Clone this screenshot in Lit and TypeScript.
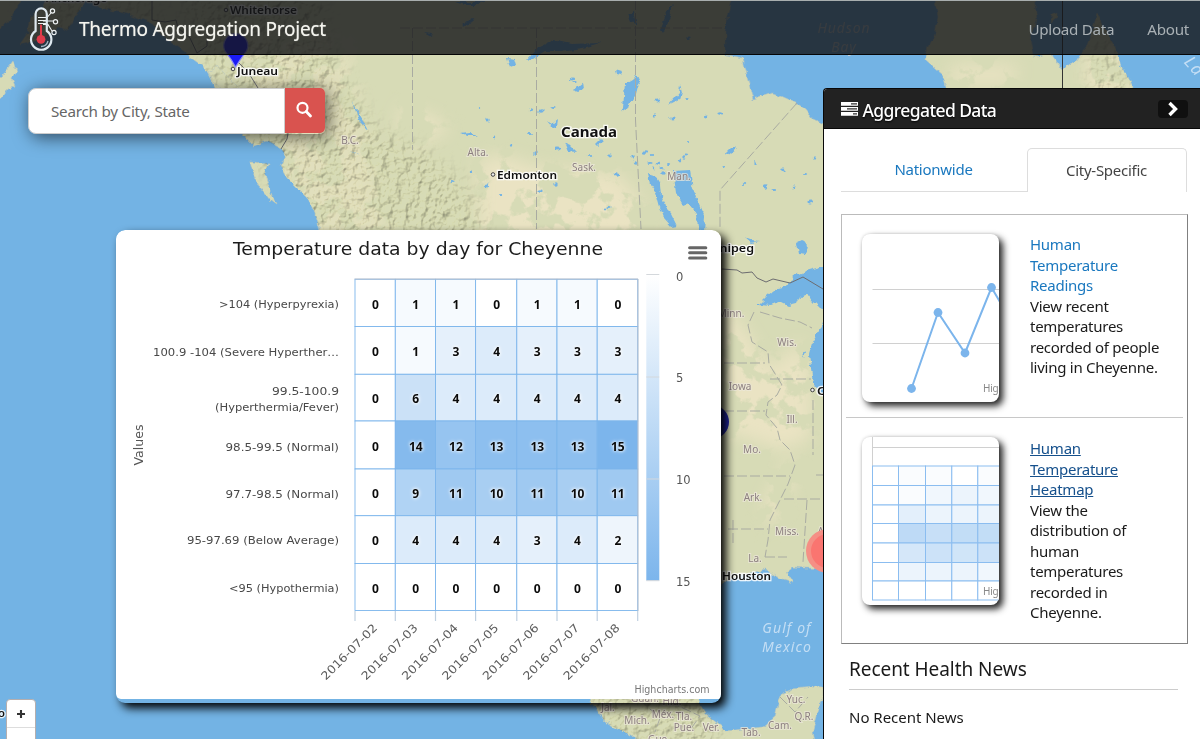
import { LitElement, html, svg, css } from "lit";
import { customElement } from "lit/decorators.js";

type Pt = [number, number];

/* ---------- map ---------- */

const LAND = [
  // mainland: Alaska panhandle down the Pacific coast, across the plains and round the Gulf
  "M-10-10H735L729 12L725 30L725 55L743 58L747 76L753 100L760 97L773 93L781 96L797 103L806 110L813 119L826 125V200H830V569L806 568L793 567L786 572L793 583L780 579L767 570L747 573L732 579L715 587L640 600L420 500L350 300L318 229L317 222L314 210L307 197L297 187L287 177L281 166L286 156L280 148L267 141L254 146L243 135L232 112L215 88L208 74L202 65L191 57L180 48L160 34L150 22L128 14L100 8L88 -2Z",
  // Queen Charlotte islands
  "M250 162L268 163L265 172L268 184L272 194L277 205L270 200L260 187L253 173Z",
  "M208 72L218 66L230 80L241 93L236 96L222 90L213 82Z",
  // Kodiak and the Alaska peninsula
  "M0 80L6 70L12 62L14 68L19 70L12 78L15 86L8 88L2 98L-6 102L-6 80Z",
  "M-4-4H22L14 12L8 22L-4 30Z",
  "M20 44L27 34L30 16L42 8L50-6L88-6L76 16L68 30L60 26L48 36L36 40Z",
  // Quebec and Labrador
  "M933-10L938 17L935 33L928 47L925 60L934 68L943 76L947 90L950 110H1150L1133 88L1128 77L1122 68L1117 53L1110 37L1102 24L1097 12L1093 30L1087 47L1079 56L1077 60L1070 64L1062 70L1056 62L1050 53L1040 57L1033 56L1030 40L1037 20L1033-10Z",
  "M1052 14L1056 12L1056 18L1051 22Z",
  // Mexico and Yucatan
  "M586 690L592 704L597 708L600 715L606 722L615 728L626 733L640 742H815L813 730L818 712L823 700V688L813 687L793 689L783 693L778 704L775 717L763 727L743 729L727 731L718 724L712 719L705 713L700 704L695 690Z",
];

const LAKES = [
  "M623 108L625 84L632 80L636 76L641 80L637 86L634 98L628 108L621 113Z",
  "M527 60L540 46L553 40L572 44L600 43L582 48L560 51L545 51L532 59L522 61Z",
  "M507 58L514 59L516 66L510 68Z",
  "M573 90L583 82L584 89L578 92Z",
  "M595 144L601 138L603 141L597 146Z",
  "M547 121L552 124L558 119L557 126L553 128Z",
  "M615 70L622 72L620 75L616 74Z",
  "M668 105L674 98L679 92L680 84L682 92L680 99L672 103Z",
  "M726 154L732 148L737 148L731 153L727 156Z",
  "M461 134L470 133L477 136L468 136Z",
  "M564 141L571 146L577 152L568 151Z",
  "M628 14L634 12L637 25L631 22Z",
  "M660 30L668 10L674 4L668 22L662 33Z",
  "M455 2H487L478 5L464 5Z",
  "M463 24L473 18L474 22L466 25Z",
  "M424 33L432 34L431 37Z",
  "M648 174L655 176L660 184L661 196L664 207L671 214L677 226L672 227L664 218L660 207L656 192L650 184Z",
  "M673 171L690 170L692 184L697 200L705 219L704 231L698 229L697 214L688 203L683 205L676 193Z",
  "M745 237L753 240L760 241L752 243Z",
  "M797 243L803 240L807 246L805 255L799 254Z",
  // Superior, Michigan
  "M758 305L768 295L777 288L787 286L793 276L806 271L820 267H830V311L819 308L813 302L807 294L800 297L797 304L788 306L780 302L770 306Z",
  "M823 322L818 333L812 343L809 355L811 368L813 383L819 393H830V322Z",
  "M803 350L806 352L804 357Z",
  "M352 102L358 113L366 126L368 130L359 121Z",
  "M352 151L359 156L354 153Z",
  "M1055 40L1060 38L1061 44Z",
];

const PONDS: Pt[] = [
  [479, 107], [488, 120], [531, 110], [553, 108], [495, 138], [535, 153], [530, 133], [558, 149], [510, 146], [575, 82],
  [572, 79], [541, 111], [590, 156], [610, 156], [616, 174], [609, 208], [605, 209], [555, 184], [500, 195], [672, 118],
  [655, 116], [687, 98], [706, 117], [721, 113], [688, 143], [783, 170], [766, 187], [774, 190], [793, 187], [756, 162],
  [806, 174], [810, 202], [814, 157], [723, 167], [687, 155], [645, 152], [652, 155], [632, 157], [635, 162], [650, 163],
  [679, 160], [684, 158], [668, 164], [657, 101], [470, 173], [452, 181], [487, 186], [540, 191], [744, 184], [688, 37],
  [657, 163], [661, 168], [654, 168], [664, 172],
];

const DASHES = [
  "M412.5 28V150", "M536.5 28V229", "M635.5 0V120L641 229", "M400 28H725", "M797 103L720 190V229",
  "M724 363H765", "M724 411H765", "M724 476H790", "M728 529H768", "M770 379H811", "M784 499H824",
  "M733 520V545", "M807 500L803 562", "M813 400V455", "M765 557H787", "M816 475H824",
  "M754 312L748 325L752 342L768 352L769 364L782 385L777 395L768 402L766 415L777 428L780 440L790 450L795 465L788 484L780 500L770 520L768 540L765 557",
  "M760 312L780 318L800 322L812 328", "M780 697L795 712L808 697", "M640 700L660 718L655 732", "M670 702L700 716L690 730",
];

const REGIONS: [string, number, number][] = [
  ["B.C.", 350, 144], ["Alta.", 478, 156], ["Sask.", 584, 171], ["Man.", 679, 180], ["Minn.", 731, 317], ["Wis.", 787, 346],
  ["Iowa", 740, 390], ["Ill.", 792, 423], ["Mo.", 752, 453], ["Ark.", 753, 501], ["Miss.", 787, 535], ["La.", 755, 562],
  ["Al", 822, 535], ["Guan.", 645, 702], ["Hid.", 672, 705], ["Jal.", 608, 711], ["Mich.", 637, 724], ["Méx.", 663, 718],
  ["Tla.", 684, 720], ["Pue.", 684, 731], ["Ver.", 711, 731], ["Gue.", 659, 743], ["Tab.", 751, 736], ["Cam.", 780, 729],
  ["Yuc.", 796, 703], ["Q.R.", 804, 720],
];

@customElement("map-canvas")
class MapCanvas extends LitElement {
  static styles = css`
    :host { display: block; width: 1200px; height: 739px; }
    svg { display: block; }
    text { font-family: "Noto Sans", "Open Sans", sans-serif; }
    .region { font-size: 10px; fill: #8d8080; stroke: #ece8dc; stroke-width: 2px; stroke-opacity: 0.7; paint-order: stroke; text-anchor: middle; }
    .city { font-size: 11.5px; font-weight: 600; fill: #111; stroke: #fff; stroke-width: 2.6px; stroke-opacity: 0.85; paint-order: stroke; }
    .country { font-size: 15px; font-weight: 700; }
    .sea { font-size: 14px; font-style: italic; letter-spacing: 1.1px; fill: #c4def4; text-anchor: middle; }
    .bay { fill: #c4d0da; letter-spacing: 0.9px; }
    .strait { font-size: 17px; }
    .relief { mix-blend-mode: multiply; }
    .dash { fill: none; stroke: #a9aba2; stroke-width: 1; stroke-dasharray: 10 3; }
    .border { fill: none; stroke: #6c6c70; stroke-width: 1; }
  `;
  render() {
    const city = (t: string, x: number, y: number, w: number) =>
      svg`<text class="city" x=${x} y=${y} textLength=${w} lengthAdjust="spacingAndGlyphs">${t}</text>`;
    const dot = (x: number, y: number) => svg`<circle cx=${x} cy=${y} r="1.8" fill="#eee" stroke="#444" stroke-width="1"/>`;
    return html`<svg width="1200" height="739" viewBox="0 0 1200 739">
      <defs>
        <filter id="rough" x="-5%" y="-5%" width="110%" height="110%" color-interpolation-filters="sRGB">
          <feTurbulence type="fractalNoise" baseFrequency="0.13" numOctaves="3" seed="4" />
          <feDisplacementMap in="SourceGraphic" scale="6" xChannelSelector="R" yChannelSelector="G" />
        </filter>
        <filter id="relief" x="0" y="0" width="100%" height="100%" color-interpolation-filters="sRGB">
          <feTurbulence type="fractalNoise" baseFrequency="0.13" numOctaves="4" seed="9" />
          <feDiffuseLighting surfaceScale="2.2" diffuseConstant="1.2" lighting-color="#fffdf2" result="l">
            <feDistantLight azimuth="225" elevation="58" />
          </feDiffuseLighting>
          <feComposite in="l" in2="SourceGraphic" operator="in" />
        </filter>
        <filter id="sand" x="0" y="0" width="100%" height="100%" color-interpolation-filters="sRGB">
          <feTurbulence type="fractalNoise" baseFrequency="0.035" numOctaves="5" seed="21" />
          <feColorMatrix values="0 0 0 0 0.918  0 0 0 0 0.89  0 0 0 0 0.765  14 0 0 0 -6.2" result="s" />
          <feComposite in="s" in2="SourceGraphic" operator="in" />
        </filter>
        <filter id="soft" x="-20%" y="-20%" width="140%" height="140%"><feGaussianBlur stdDeviation="9" /></filter>
        <clipPath id="land">${LAND.map((d) => svg`<path d=${d} />`)}</clipPath>
        <mask id="hills">
          <g filter="url(#soft)" fill="#fff">
            <path d="M170-20H320L335 60L375 130L425 150L470 190L490 240H310L230 120Z" />
            <path d="M15-10H150L170 40L20 50Z" fill="#aaa" />
            <path d="M580 690H710L720 750H590Z" />
            <path d="M1092 0L1140 100H1090Z" fill="#bbb" />
          </g>
        </mask>
        <mask id="plains">
          <g filter="url(#soft)" fill="#fff">
            <path d="M478 160L500 155L540 168L600 172L618 174L640 200L648 240H480Z" />
            <path d="M400 105L440 120L450 130L415 145L400 130Z" />
            <path d="M724 300L745 330L770 370L800 340L812 380L810 440L780 450L724 430Z" />
            <path d="M790 460L800 462L782 510L768 530L765 500Z" />
            <path d="M950 66L1020 66L1010 84L950 84ZM1090 40L1130 60V90H1085Z" />
            <path d="M230 30L350 40L360 110L390 240H300Z" fill="#888" />
          </g>
        </mask>
      </defs>
      <rect width="1200" height="739" fill="#73b3e4" />
      <g filter="url(#rough)" fill="#d7dbb6" stroke="#b9c6bd" stroke-width="0.6">${LAND.map((d) => svg`<path d=${d} />`)}</g>
      <g clip-path="url(#land)">
        <g mask="url(#plains)"><rect width="1200" height="739" filter="url(#sand)" /></g>
      </g>
      <g clip-path="url(#land)" class="relief" opacity="0.6">
        <g mask="url(#hills)"><rect width="1200" height="739" filter="url(#relief)" /></g>
      </g>
      <g filter="url(#rough)" fill="#73b3e4">
        ${LAKES.map((d) => svg`<path d=${d} />`)}
        ${PONDS.map(([x, y], i) => svg`<ellipse cx=${x} cy=${y} rx=${1.2 + (i % 4) * 0.5} ry=${1 + (i % 3) * 0.4} />`)}
      </g>
      ${DASHES.map((d) => svg`<path class="dash" d=${d} />`)}
      <path class="border" d="M152-5V20L165 22L176 20L178 28L190 38L197 53L207 46V40M238 62L248 72L258 88M288 133L287 139L281 149M722 269L737 270L742 273L752 272L757 278L766 282L773 279L790 283L803 277L823 289" />
      <path d="M1062.5 0V90" stroke="#333" stroke-width="1" />
      <text class="sea bay" x="844" y="33">Hudson</text>
      <text class="sea bay" x="844" y="52">Bay</text>
      <text class="sea" x="787" y="633">Gulf of</text>
      <text class="sea" x="787" y="652">Mexico</text>
      <text class="sea strait" transform="translate(1190 70) rotate(48)">La</text>
      ${REGIONS.map(([t, x, y]) => svg`<text class="region" x=${x} y=${y}>${t}</text>`)}
      ${dot(226, 10)}${dot(233, 69)}${dot(493, 174.5)}${dot(812.5, 390)}
      ${city("Anchorage", 46, 2, 61)}
      ${city("Whitehorse", 230, 14, 67)}
      ${city("Juneau", 237, 75, 41)}
      ${city("Edmonton", 497, 179, 60)}
      ${city("Winnipeg", 696, 252, 58)}
      ${city("Houston", 722, 580, 49)}
      ${city("Chicago", 817, 395, 50)}
      ${city("o", -2, 717, 7)}
      <text class="city country" x="561" y="137" textLength="56" lengthAdjust="spacingAndGlyphs">Canada</text>
      <path d="M235.5 67L231.5 60L225 51A12 12 0 1 1 246.500 51L240 60Z" fill="#1b1bf5" stroke="#8a8af5" stroke-width="1.2" />
      <circle cx="712" cy="422" r="17" fill="#2024a4" />
      <circle cx="828" cy="551" r="22" fill="#f58f85" />
      <circle cx="828" cy="551" r="17" fill="#fa7570" />
    </svg>`;
  }
}

/* ---------- heatmap ---------- */

const DAYS = ["2016-07-02", "2016-07-03", "2016-07-04", "2016-07-05", "2016-07-06", "2016-07-07", "2016-07-08"];
const COLS = [239, 279.3, 319.5, 359.6, 400.8, 441, 481.2, 521.7];
const ROWS = [49.3, 96.5, 144.3, 191, 239, 285.7, 333.5, 380.5];
const HEAT = [
  [0, 1, 1, 0, 1, 1, 0],
  [0, 1, 3, 4, 3, 3, 3],
  [0, 6, 4, 4, 4, 4, 4],
  [0, 14, 12, 13, 13, 13, 15],
  [0, 9, 11, 10, 11, 10, 11],
  [0, 4, 4, 4, 3, 4, 2],
  [0, 0, 0, 0, 0, 0, 0],
];
const Y_LABELS: [string, number, number][] = [
  [">104 (Hyperpyrexia)", 78, 120],
  ["100.9 -104 (Severe Hyperther…", 126, 186],
  ["99.5-100.9", 165, 67],
  ["(Hyperthermia/Fever)", 180.5, 124],
  ["98.5-99.5 (Normal)", 221, 113.5],
  ["97.7-98.5 (Normal)", 267.5, 113.5],
  ["95-97.69 (Below Average)", 314, 152],
  ["<95 (Hypothermia)", 362, 110],
];
const shade = (v: number, max = 15) => {
  const k = v / max;
  const mix = (to: number) => Math.round(255 + (to - 255) * k);
  return `rgb(${mix(124)},${mix(181)},${mix(236)})`;
};

@customElement("heatmap-card")
class HeatmapCard extends LitElement {
  static styles = css`
    :host { display: block; width: 605px; height: 473px; border-radius: 9px; box-shadow: 5px 5px 10px #000; overflow: hidden; }
    svg { display: block; background: #fff; border-radius: 9px 9px 2px 5px; }
    text { font-family: "DejaVu Sans", "Noto Sans", sans-serif; }
    .title { font-size: 18.5px; fill: #1c1c1c; }
    .label { font-size: 11.3px; fill: #484848; text-anchor: end; }
    .day { fill: #5c5c5c; font-size: 11.3px; text-anchor: end; }
    .axis { font-size: 11.5px; fill: #555; }
    .val { font-family: "Noto Sans", sans-serif; font-size: 12px; font-weight: 700; fill: #0a0a0a; text-anchor: middle; text-shadow: 0 0 3px #fff, 0 0 4px #fff; }
    .credit { font-size: 9.6px; fill: #777; }
  `;
  render() {
    return html`<svg width="605" height="469" viewBox="0 0 605 469">
      <defs><linearGradient id="scale" x1="0" y1="0" x2="0" y2="1"><stop offset="0" stop-color="#fff" /><stop offset="1" stop-color="#7cb5ec" /></linearGradient></defs>
      <text class="title" x="117" y="25" textLength="370" lengthAdjust="spacingAndGlyphs">Temperature data by day for Cheyenne</text>
      ${[17.7, 22.8, 28].map((y) => svg`<path d=${`M573.6 ${y}H589.800`} stroke="#666" stroke-width="3" stroke-linecap="round" />`)}
      ${HEAT.map((row, r) => row.map((v, c) => svg`<rect x=${COLS[c]} y=${ROWS[r]} width=${COLS[c + 1] - COLS[c]} height=${ROWS[r + 1] - ROWS[r]} fill=${shade(v)} stroke="#7cb5ec" stroke-width="0.9" />`))}
      ${COLS.map((x) => svg`<path d=${`M${x} 381V391`} stroke="#c0d0e0" stroke-width="1.2" />`)}
      <path d="M238.5 49H522V381" fill="none" stroke="#b8c0cc" stroke-width="1" />
      ${HEAT.map((row, r) => row.map((v, c) => svg`<text class="val" x=${(COLS[c] + COLS[c + 1]) / 2 + 0.4} y=${(ROWS[r] + ROWS[r + 1]) / 2 + 5.8}>${v}</text>`))}
      ${Y_LABELS.map(([t, y, w]) => svg`<text class="label" x="223" y=${y} textLength=${w} lengthAdjust="spacingAndGlyphs">${t}</text>`)}
      <text class="axis" transform="translate(26.5 235.5) rotate(-90)" textLength="41" lengthAdjust="spacingAndGlyphs">Values</text>
      ${DAYS.map((d, i) => svg`<text class="day" transform=${`translate(${262 + i * 40.4} 398.5) rotate(-45)`} textLength="74" lengthAdjust="spacingAndGlyphs">${d}</text>`)}
      <rect x="530.3" y="44.5" width="13" height="306" fill="url(#scale)" />
      ${[44.5, 147, 249, 350.7].map((y) => svg`<path d=${`M530.3 ${y}H543.300`} stroke="#d4d8dc" stroke-width="1" />`)}
      ${["0", "5", "10", "15"].map((t, i) => svg`<text class="axis" x="560" y=${50.5 + i * 101.7}>${t}</text>`)}
      <text class="credit" x="518.5" y="463" textLength="75" lengthAdjust="spacingAndGlyphs">Highcharts.com</text>
    </svg>`;
  }
}

/* ---------- thumbnails ---------- */

const TX = [10.5, 36.5, 63.5, 89.8, 115.8, 142];
const TY = [29, 48.5, 68, 86.5, 106, 125.5, 144, 163];
const lineThumb = html`<svg width="137" height="168" viewBox="0 0 137 168">
  <path d="M10.5 55.5H137M10.5 109.5H137" stroke="#d0d0d0" />
  <path d="M49.5 154.5L76 78.5L103 119L129.5 53.5L141 73" fill="none" stroke="#7cb5ec" stroke-width="2" />
  ${([[49.5, 154.5], [76, 78.5], [103, 119], [129.5, 53.5]] as Pt[]).map(([x, y]) => svg`<circle cx=${x} cy=${y} r="4.4" fill="#7cb5ec" />`)}
  <text x="121" y="158" font-family="Noto Sans, sans-serif" font-size="10" fill="#888">Hig</text>
</svg>`;
const gridThumb = html`<svg width="137" height="168" viewBox="0 0 137 168">
  <path d="M10.5 0V163M10.5 10.5H137" stroke="#d0d0d0" fill="none" />
  ${HEAT.map((row, r) => row.slice(0, 5).map((v, c) => svg`<rect x=${TX[c]} y=${TY[r]} width=${TX[c + 1] - TX[c]} height=${TY[r + 1] - TY[r]} fill=${shade(v, 28)} stroke="#8bbdf0" />`))}
  <text x="121" y="158" font-family="Noto Sans, sans-serif" font-size="10" fill="#888">Hig</text>
</svg>`;

/* ---------- sidebar ---------- */

@customElement("data-panel")
class DataPanel extends LitElement {
  static styles = css`
    :host { display: flex; flex-direction: column; box-sizing: border-box; width: 377px; height: 651px; border: 1px solid #080808; border-right: 0; border-bottom: 0; border-radius: 4px 0 0 0; background: #fff; overflow: hidden; font-size: 15px; letter-spacing: -0.26px; color: #1a1a1a; }
    .head { display: flex; align-items: center; height: 39px; flex: none; padding: 0 12px 0 16px; background: #222; border-bottom: 1px solid #080808; color: #fff; }
    .stack { margin-top: 1px; }
    .head h2 { flex: 1; margin: 0 0 0 3.5px; font-size: 17.5px; font-weight: 500; letter-spacing: -0.6px; line-height: 38px; padding-top: 2px; text-shadow: 0 1px 2px #000; }
    .toggle { display: grid; place-items: center; width: 30px; height: 18px; border-radius: 4px; background: #101010; }
    .tabs { display: flex; margin: 19px 13px 0 17px; height: 44px; line-height: 43px; }
    .tab { box-sizing: border-box; text-align: center; border-bottom: 1px solid #ddd; width: 186px; color: #1a78bf; padding-right: 1px; }
    .tab.on { width: 160px; border: 1px solid #ddd; border-bottom: 0; border-radius: 5px 5px 0 0; color: #444; padding: 0 1px 0 0; line-height: 42px; }
    .charts { box-sizing: border-box; height: 430px; flex: none; margin: 22px 12px 0 17px; border: 1px solid; border-color: #bbb #808080 #808080 #bbb; padding: 0 4px 0 4px; }
    .row { box-sizing: border-box; display: flex; padding: 19px 0 0 16px; height: 202px; }
    .row + .row { border-top: 1px solid #c8c8c8; height: 220px; padding-top: 19px; }
    .thumb { flex: none; width: 137px; height: 167.5px; margin-right: 31px; border-radius: 8px; background: #fff; box-shadow: 4px 4px 7px #222, 0 0 3px rgba(0, 0, 0, 0.15); overflow: hidden; }
    .thumb svg { display: block; }
    .copy { width: 140px; line-height: 20.5px; }
    .row + .row .copy { padding-top: 1px; }
    .copy a { display: block; color: #1a78bf; }
    .copy a.hover { color: #15508c; text-decoration: underline; }
    .copy a, .copy span { white-space: pre-line; }
    h3 { margin: 10px 22px 0 25px; height: 35px; line-height: 30px; font-size: 19px; font-weight: 400; letter-spacing: -0.05px; border-bottom: 1px solid #ccc; }
    .none { margin: 16px 0 0 25px; line-height: 22px; letter-spacing: -0.02px; }
  `;
  render() {
    return html`
      <div class="head">
        <svg class="stack" width="19" height="16" viewBox="0 0 19 16"><path d="M1 1h17v3.700H1zM1 6h17v3.700H1zM1 11h17v3.700H1z" fill="#fff" /><path d="M11 2.800h6M7 7.800h10M13 12.800h4" stroke="#333" stroke-width="1.200" /></svg>
        <h2>Aggregated Data</h2>
        <span class="toggle"><svg width="14" height="18" viewBox="0 0 14 18"><path d="M3.500 3L9.500 9L3.500 15" fill="none" stroke="#fff" stroke-width="3.400" /></svg></span>
      </div>
      <div class="tabs"><div class="tab">Nationwide</div><div class="tab on">City-Specific</div></div>
      <div class="charts">
        <div class="row">
          <div class="thumb">${lineThumb}</div>
          <div class="copy"><a>${"Human\nTemperature\nReadings"}</a><span>${"View recent\ntemperatures\nrecorded of people\nliving in Cheyenne."}</span></div>
        </div>
        <div class="row">
          <div class="thumb">${gridThumb}</div>
          <div class="copy"><a class="hover">${"Human\nTemperature\nHeatmap"}</a><span>${"View the\ndistribution of\nhuman\ntemperatures\nrecorded in\nCheyenne."}</span></div>
        </div>
      </div>
      <h3>Recent Health News</h3>
      <div class="none">No Recent News</div>`;
  }
}

/* ---------- page ---------- */

const logo = html`<svg class="logo" width="34" height="50" viewBox="28 3 34 50">
  <g fill="none" stroke="#eef2f4">
    <path d="M43 21H53M43 24.5H48L52 31M44 17.5H47L51 13" stroke-width="1.1" />
    <path d="M35.6 31V14a5.600 5.600 0 0 1 11.200 0V31a10.200 10.200 0 1 1-11.200 0Z" stroke-width="2.2" stroke="#dfe9f0" />
    <path d="M38 17.500H46M38 20.500H46M38 23.500H46" stroke-width="1" />
    <circle cx="52.5" cy="11" r="2.1" stroke-width="1.2" /><circle cx="55.5" cy="21.7" r="2.1" stroke-width="1.2" /><circle cx="54" cy="32.5" r="2.1" stroke-width="1.2" />
    <path d="M41 46.5A7.300 7.300 0 0 0 48 41" stroke="#9fb4c2" stroke-width="1.3" />
  </g>
  <path d="M41 25.5V38" stroke="#e03a4a" stroke-width="2" stroke-linecap="round" /><circle cx="41" cy="39.3" r="4.400" fill="#e03a4a" />
</svg>`;

@customElement("app-root")
class AppRoot extends LitElement {
  static styles = css`
    :host { display: block; position: relative; width: 1200px; height: 739px; overflow: hidden; font-family: "Noto Sans", "Open Sans", sans-serif; }
    map-canvas { position: absolute; inset: 0; }
    header { position: relative; box-sizing: border-box; display: flex; align-items: center; height: 55px; padding: 0 11px 0 28px; background: rgba(20, 21, 24, 0.8); border-top: 1px solid #a8aeae; border-bottom: 1px solid #060606; }
    .logo { flex: none; }
    h1 { flex: 1; margin: 0 0 0 17px; padding-top: 3px; font-size: 19px; font-weight: 400; letter-spacing: -0.24px; color: #f4f4ee; text-shadow: 0 0 1px rgba(255, 255, 255, 0.6); }
    nav { display: flex; gap: 33px; padding-top: 2px; font-size: 15.2px; letter-spacing: -0.28px; color: #a9b0b4; }
    .search { position: absolute; left: 28px; top: 88px; display: flex; width: 297px; height: 46px; border-radius: 8px 5px 5px 8px; box-shadow: 3px 3px 18px rgba(0, 0, 0, 0.6); }
    .field { box-sizing: border-box; flex: 1; padding-left: 22px; border: 1px solid #ccc; border-radius: 8px 0 0 8px; background: #fff; color: #666; font-size: 15.2px; letter-spacing: -0.22px; line-height: 45px; }
    .go { display: grid; place-items: center; width: 40px; height: 45px; border-radius: 0 5px 5px 0; background: #d9534f; }
    .go svg { margin: 0 2px 1px 0; }
    heatmap-card { position: absolute; left: 116px; top: 230px; }
    data-panel { position: absolute; left: 823px; top: 88px; }
    .zoom { position: absolute; left: 6px; top: 699px; box-sizing: border-box; width: 30px; height: 60px; border: 1px solid #b5aeae; border-radius: 4px; background: #fff; }
    .zoom svg { display: block; border-bottom: 1px solid #ddd; }
  `;
  render() {
    return html`
      <map-canvas></map-canvas>
      <header>${logo}<h1>Thermo Aggregation Project</h1><nav><span>Upload Data</span><span>About</span></nav></header>
      <div class="search">
        <div class="field">Search by City, State</div>
        <div class="go"><svg width="18" height="18" viewBox="0 0 18 18"><circle cx="7.5" cy="6.8" r="5" fill="none" stroke="#fff" stroke-width="2.200" /><path d="M11.2 10.5L15.5 15" stroke="#fff" stroke-width="2.800" stroke-linecap="round" /></svg></div>
      </div>
      <heatmap-card></heatmap-card>
      <data-panel></data-panel>
      <div class="zoom"><svg width="28" height="27" viewBox="0 0 28 27"><path d="M14 10V18M10 14H18" stroke="#333" stroke-width="2.100" /></svg></div>`;
  }
}
